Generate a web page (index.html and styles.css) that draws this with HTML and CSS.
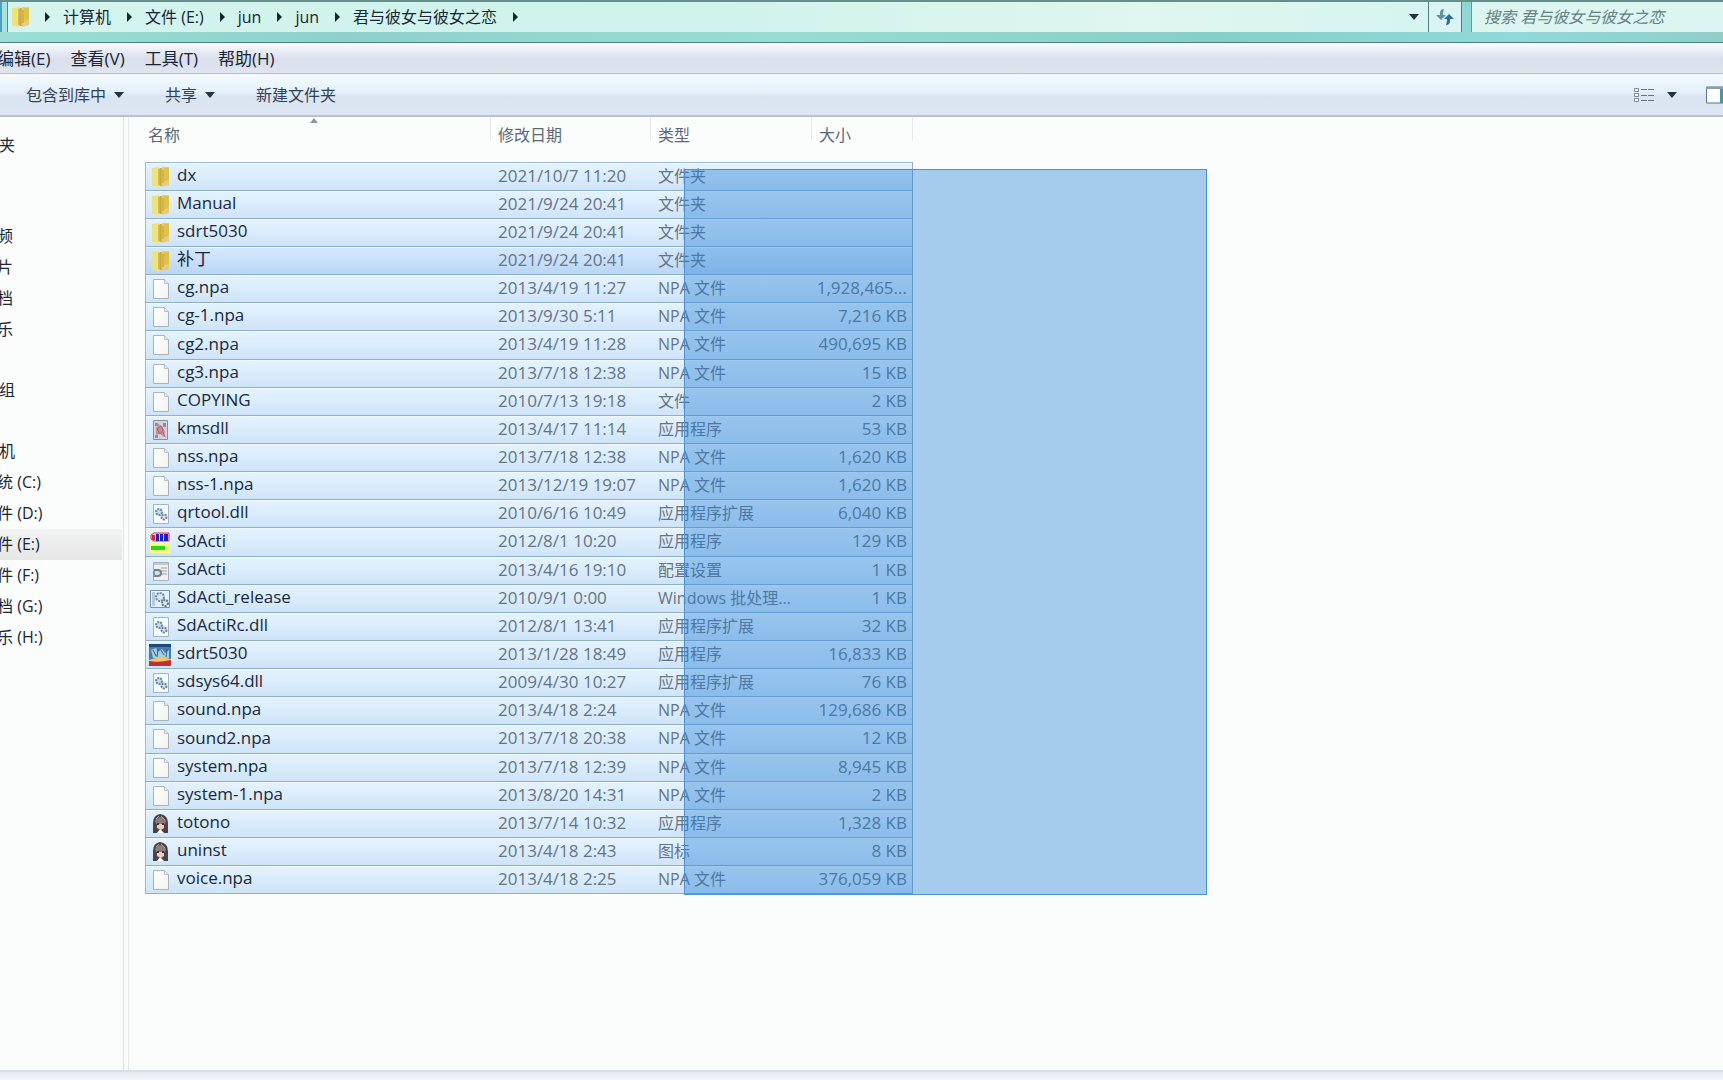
FILE: index.html
```html
<!DOCTYPE html>
<html lang="zh-CN">
<head>
<meta charset="utf-8">
<title>君与彼女与彼女之恋</title>
<link rel="stylesheet" href="styles.css">
</head>
<body>
<svg class="sprite" aria-hidden="true">
  <defs>
    <linearGradient id="gold" x1="0" x2="1" y1="0" y2="0"><stop offset="0" stop-color="#f3e88e"/><stop offset=".45" stop-color="#e6cd55"/><stop offset=".6" stop-color="#c9a630"/><stop offset="1" stop-color="#ecd27a"/></linearGradient>
    <linearGradient id="paper" x1="0" x2="1" y1="0" y2="1"><stop offset="0" stop-color="#fff"/><stop offset="1" stop-color="#f2f2f0"/></linearGradient>
  </defs>
  <symbol id="folder" viewBox="0 0 22 22"><path d="M3 2l7-1v20l-7-1z" fill="#eee27c"/><path d="M8 2h6v18H8z" fill="url(#gold)"/><path d="M13 1h7v18l-7 2z" fill="#e5cc78"/><path d="M15 2h5v11l-5 3z" fill="#dfc348"/><path d="M10 3v16M14 4v13" stroke="#bf9c30"/></symbol>
  <symbol id="file" viewBox="0 0 22 22"><path d="M4.500 1.500h11l4 4v15h-15z" fill="url(#paper)" stroke="#a9b3bc"/><path d="M15.500 1.500v4h4" fill="#e6ebef" stroke="#b7c0c8"/></symbol>
  <symbol id="gears" viewBox="0 0 22 22"><path d="M4.500 1.500h15v19h-15z" fill="#f5fafc" stroke="#a4b4c0"/><circle cx="10" cy="9" r="3" fill="#c3dcec" stroke="#6388a4" stroke-width="2" stroke-dasharray="2 1"/><circle cx="15" cy="14" r="2.500" fill="#dbe6ec" stroke="#6d8494" stroke-width="2" stroke-dasharray="2 1"/></symbol>
  <symbol id="batch" viewBox="0 0 22 22"><path d="M1.500 2.500h19v17h-19z" fill="#e4f1f9" stroke="#7795aa"/><path d="M3 4h3v14H3z" fill="#b7ccda"/><circle cx="11" cy="9" r="4" fill="#d2e5f0" stroke="#708ca0" stroke-width="2" stroke-dasharray="2 1"/><circle cx="16" cy="15" r="3" fill="#d2e5f0" stroke="#5d798d" stroke-width="2" stroke-dasharray="2 1"/></symbol>
  <symbol id="config" viewBox="0 0 22 22"><path d="M4.500 2.500h15v18h-15z" fill="#eef0f0" stroke="#a7b0b6"/><path d="M5 4h14M12 8h6M12 11h6M12 14h6" stroke="#c3cacf" stroke-width="2"/><path d="M5 10h4q3 0 3 3t-3 3H5" fill="#d5dde2" stroke="#75838c" stroke-width="2"/><path d="M5 11v6" stroke="#8795a0" stroke-width="2"/></symbol>
  <symbol id="installer" viewBox="0 0 22 22"><path d="M4.500 1.500h14v19h-14z" fill="#d5d3dc" stroke="#8b8e9c"/><path d="M6 4h3v3H6zM14 4h3v4h-3zM6 16h3v3H6z" fill="#8594a2"/><path d="M9 5l4 2 3 5-1 6-4-3-4 1V9z" fill="#c98f9b"/><path d="M8 10l4-3 2 4-3 4zM14 13l2 5" stroke="#a2606c" fill="none"/></symbol>
  <symbol id="acti" viewBox="0 0 22 22"><path d="M1 0h20v12H1z" fill="#fdf3dc"/><path d="M1 12h20v10H1z" fill="#f4ff7a"/><path d="M5 2h15v8H5L2 8V4z" fill="#e8e4ff" stroke="#e21d46" stroke-width="1"/><path d="M3 4h3v5H3z" fill="#d4204e"/><path d="M7 3h3v7H7zM11 3h3v7h-3zM15 3h4v7h-4z" fill="#211eb9"/><path d="M2 15h14v4H2z" fill="#25d91c"/></symbol>
  <symbol id="game" viewBox="0 0 22 22"><path d="M0 0h22v22H0z" fill="#467eae"/><path d="M0 0h22v3H0z" fill="#20467f"/><path d="M2 6l5-2 2 4 4-3 3 4 4-3v8H4z" fill="#a6cbe4"/><path d="M4 6l3 6M9 5l-1 8M12 6l3 5M18 5l-1 8" stroke="#315b88"/><path d="M0 16q10-4 22-1v4H0z" fill="#f0c761"/><path d="M0 17q10 2 22-1v6H0z" fill="#c62c35"/></symbol>
  <symbol id="girl" viewBox="0 0 22 22"><path d="M4 20V10q0-8 7-9 8 1 8 9v10z" fill="#4f4245"/><path d="M6 8q5-8 11 0l-1 3H7z" fill="#8b7d7d"/><path d="M8 11h7v4l-3 2-4-2z" fill="#e9cfc6"/><path d="M8 11h2M13 11h2" stroke="#3c3135" stroke-width="2"/><path d="M8 20l3-4 4 4z" fill="#fff"/><path d="M7 6l3-3M12 3l4 4" stroke="#b6a7a6"/></symbol>
</svg>

<header class="address-bar">
  <span class="nav-edge"></span>
  <nav class="crumbs" aria-label="地址">
    <svg class="icon"><use href="#folder"/></svg>
    <i class="chevron"></i><a href="#">计算机</a>
    <i class="chevron"></i><a href="#">文件 (E:)</a>
    <i class="chevron"></i><a href="#">jun</a>
    <i class="chevron"></i><a href="#">jun</a>
    <i class="chevron"></i><a href="#">君与彼女与彼女之恋</a>
    <i class="chevron"></i>
    <button class="history" aria-label="历史"><i class="caret"></i></button>
  </nav>
  <button class="refresh" aria-label="刷新"><svg width="20" height="18" viewBox="0 0 20 18"><path d="M9 1Q5 1 5 5v2H1l5 5 5-5H8V5z" fill="#5b95ac"/><path d="M11 17q4 0 4-4v-2h4l-5-5-5 5h3v2z" fill="#2c6da0"/></svg></button>
  <input class="search" type="search" aria-label="搜索" placeholder="搜索 君与彼女与彼女之恋">
</header>

<nav class="menu-bar" aria-label="菜单">
  <button>编辑(E)</button><button>查看(V)</button><button>工具(T)</button><button>帮助(H)</button>
</nav>

<div class="toolbar">
  <button>包含到库中<i class="caret"></i></button>
  <button>共享<i class="caret"></i></button>
  <button>新建文件夹</button>
  <div class="view-tools">
    <button aria-label="视图"><svg width="22" height="16" viewBox="0 0 22 16"><path d="M1.500 1.500h4v3h-4zM1.500 6.500h4v3h-4zM1.500 11.500h4v3h-4z" fill="#fff" stroke="#7d8a98"/><path d="M8 2.500h13M8 8.500h13M8 13.500h13" stroke="#667382" stroke-dasharray="6 1"/></svg></button>
    <button aria-label="更多视图"><i class="caret"></i></button>
    <button class="preview" aria-label="预览窗格"><svg width="17" height="18" viewBox="0 0 17 18"><path d="M.5 1h17v16H.5z" fill="#fff" stroke="#5b7388"/><path d="M0 1h17v2H0z" fill="#8b9eac"/><path d="M14 3h3v14h-3z" fill="#3f9aa3"/></svg></button>
  </div>
</div>

<main class="explorer">
  <aside class="sidebar">
    <ul><li>夹</li></ul>
    <ul class="nested after-favorites"><li>频</li><li>片</li><li>档</li><li>乐</li></ul>
    <ul><li>组</li></ul>
    <ul><li>机</li></ul>
    <ul class="nested drives"><li>统 (C:)</li><li>件 (D:)</li><li class="current">件 (E:)</li><li>件 (F:)</li><li>档 (G:)</li><li>乐 (H:)</li></ul>
  </aside>
  <section class="files">
    <table>
      <thead><tr><th class="name">名称<i class="sort"></i></th><th class="date">修改日期</th><th class="type">类型</th><th class="size">大小</th></tr></thead>
      <tbody>
        <tr><td><svg class="icon"><use href="#folder"/></svg>dx</td><td>2021/10/7 11:20</td><td>文件夹</td><td></td></tr>
        <tr><td><svg class="icon"><use href="#folder"/></svg>Manual</td><td>2021/9/24 20:41</td><td>文件夹</td><td></td></tr>
        <tr><td><svg class="icon"><use href="#folder"/></svg>sdrt5030</td><td>2021/9/24 20:41</td><td>文件夹</td><td></td></tr>
        <tr class="focused"><td><svg class="icon"><use href="#folder"/></svg>补丁</td><td>2021/9/24 20:41</td><td>文件夹</td><td></td></tr>
        <tr><td><svg class="icon"><use href="#file"/></svg>cg.npa</td><td>2013/4/19 11:27</td><td>NPA 文件</td><td>1,928,465...</td></tr>
        <tr><td><svg class="icon"><use href="#file"/></svg>cg-1.npa</td><td>2013/9/30 5:11</td><td>NPA 文件</td><td>7,216 KB</td></tr>
        <tr><td><svg class="icon"><use href="#file"/></svg>cg2.npa</td><td>2013/4/19 11:28</td><td>NPA 文件</td><td>490,695 KB</td></tr>
        <tr><td><svg class="icon"><use href="#file"/></svg>cg3.npa</td><td>2013/7/18 12:38</td><td>NPA 文件</td><td>15 KB</td></tr>
        <tr><td><svg class="icon"><use href="#file"/></svg>COPYING</td><td>2010/7/13 19:18</td><td>文件</td><td>2 KB</td></tr>
        <tr><td><svg class="icon"><use href="#installer"/></svg>kmsdll</td><td>2013/4/17 11:14</td><td>应用程序</td><td>53 KB</td></tr>
        <tr><td><svg class="icon"><use href="#file"/></svg>nss.npa</td><td>2013/7/18 12:38</td><td>NPA 文件</td><td>1,620 KB</td></tr>
        <tr><td><svg class="icon"><use href="#file"/></svg>nss-1.npa</td><td>2013/12/19 19:07</td><td>NPA 文件</td><td>1,620 KB</td></tr>
        <tr><td><svg class="icon"><use href="#gears"/></svg>qrtool.dll</td><td>2010/6/16 10:49</td><td>应用程序扩展</td><td>6,040 KB</td></tr>
        <tr><td><svg class="icon"><use href="#acti"/></svg>SdActi</td><td>2012/8/1 10:20</td><td>应用程序</td><td>129 KB</td></tr>
        <tr><td><svg class="icon"><use href="#config"/></svg>SdActi</td><td>2013/4/16 19:10</td><td>配置设置</td><td>1 KB</td></tr>
        <tr><td><svg class="icon"><use href="#batch"/></svg>SdActi_release</td><td>2010/9/1 0:00</td><td>Windows 批处理...</td><td>1 KB</td></tr>
        <tr><td><svg class="icon"><use href="#gears"/></svg>SdActiRc.dll</td><td>2012/8/1 13:41</td><td>应用程序扩展</td><td>32 KB</td></tr>
        <tr><td><svg class="icon"><use href="#game"/></svg>sdrt5030</td><td>2013/1/28 18:49</td><td>应用程序</td><td>16,833 KB</td></tr>
        <tr><td><svg class="icon"><use href="#gears"/></svg>sdsys64.dll</td><td>2009/4/30 10:27</td><td>应用程序扩展</td><td>76 KB</td></tr>
        <tr><td><svg class="icon"><use href="#file"/></svg>sound.npa</td><td>2013/4/18 2:24</td><td>NPA 文件</td><td>129,686 KB</td></tr>
        <tr><td><svg class="icon"><use href="#file"/></svg>sound2.npa</td><td>2013/7/18 20:38</td><td>NPA 文件</td><td>12 KB</td></tr>
        <tr><td><svg class="icon"><use href="#file"/></svg>system.npa</td><td>2013/7/18 12:39</td><td>NPA 文件</td><td>8,945 KB</td></tr>
        <tr><td><svg class="icon"><use href="#file"/></svg>system-1.npa</td><td>2013/8/20 14:31</td><td>NPA 文件</td><td>2 KB</td></tr>
        <tr><td><svg class="icon"><use href="#girl"/></svg>totono</td><td>2013/7/14 10:32</td><td>应用程序</td><td>1,328 KB</td></tr>
        <tr><td><svg class="icon"><use href="#girl"/></svg>uninst</td><td>2013/4/18 2:43</td><td>图标</td><td>8 KB</td></tr>
        <tr><td><svg class="icon"><use href="#file"/></svg>voice.npa</td><td>2013/4/18 2:25</td><td>NPA 文件</td><td>376,059 KB</td></tr>
      </tbody>
    </table>
    <div class="marquee"></div>
  </section>
</main>
<footer class="details"></footer>
</body>
</html>
```
FILE: styles.css
```css
* { box-sizing: border-box; }

body {
  margin: 0;
  min-height: 100vh;
  display: flex;
  flex-direction: column;
  overflow-x: hidden;
  background: #fbfdfd;
  color: #1a2633;
  font: 16px/20px "Open Sans", "Noto Sans CJK SC", sans-serif;
}

button {
  border: 0;
  padding: 0;
  background: none;
  color: inherit;
  font: inherit;
  white-space: nowrap;
}

a { color: inherit; text-decoration: none; }
ul { margin: 0; padding: 0; list-style: none; }
.sprite { position: absolute; width: 0; height: 0; }
.icon { width: 22px; height: 22px; flex: none; }

.caret {
  display: inline-block;
  border: 5px solid transparent;
  border-top: 6px solid #26323f;
  border-bottom: 0;
}

.chevron {
  border: 5px solid transparent;
  border-left: 5px solid #13282c;
  border-right: 0;
}

/* Address bar */
.address-bar {
  display: flex;
  height: 43px;
  padding-bottom: 10px;
  border-top: 2px solid #668e8a;
  border-bottom: 1px solid #4b8482;
  background: linear-gradient(90deg, #9adfd6, #8fd0cc 20%, #99dcd4 45%, #86cfc8 70%, #90d9d8 88%, #8fcfca);
}

.nav-edge {
  width: 7px;
  background: linear-gradient(90deg, #4f9fc0 2px, #a5e2e0 2px);
}

.crumbs {
  flex: 1;
  display: flex;
  align-items: center;
  border-left: 1px solid #4f8b8c;
  background: linear-gradient(90deg, #d5f4ee, #cdf3ea 45%, #e0f6f0 80%, #d6f5ef);
}

.crumbs .icon { margin-left: 1px; }
.crumbs .chevron { margin: 0 13px 0 16px; }
.crumbs .icon + .chevron { margin-left: 14px; }
.crumbs .history { margin-left: auto; width: 28px; }
.crumbs .caret { display: block; width: 10px; margin: auto; }

.refresh {
  width: 34px;
  border-left: 1px solid #55807f;
  border-right: 1px solid #55807f;
  background: #d9f4f1;
}

.refresh svg { display: block; margin: auto; }

.search {
  width: 252px;
  margin-left: 9px;
  padding: 0 12px;
  border: 0;
  border-left: 1px solid #6a9a98;
  border-radius: 0;
  background: #dcf5f0;
  font: italic 16px/20px "Open Sans", "Noto Sans CJK SC", sans-serif;
  appearance: none;
}

.search::placeholder { color: #64807f; opacity: 1; }

/* Menus */
.menu-bar {
  display: flex;
  gap: 20px;
  height: 31px;
  margin-left: -3px;
  padding-top: 2px;
  border-bottom: 1px solid #b7bfce;
  background: linear-gradient(#fafcff, #e9edf6 25%, #d9dfeb 55%, #dfe5f0);
  font-size: 17px;
}

.toolbar {
  display: flex;
  align-items: center;
  gap: 41px;
  height: 43px;
  padding-left: 26px;
  border-bottom: 2px solid #b9c0c8;
  background: linear-gradient(#f6f9fc, #ecf7fe 20%, #e3eef9 45%, #dae5f1 55%, #dce7f3);
  color: #334256;
}

.toolbar .caret { margin-left: 8px; vertical-align: 3px; }
.view-tools { display: flex; align-items: center; gap: 12px; margin-left: auto; }
.view-tools svg { display: block; }
.toolbar .view-tools .caret { margin-left: 0; }
.preview { margin-left: 17px; }

/* Panes */
.explorer { flex: 1; display: flex; }

.sidebar {
  width: 129px;
  flex: none;
  display: flex;
  flex-direction: column;
  gap: 30px;
  padding: 13px 6px 0 0;
  border-right: 1px solid #e5e8ee;
  background: linear-gradient(#dfe3e9, #dfe3e9) 123px 0 / 1px 100% no-repeat;
}

.sidebar li { height: 31px; line-height: 31px; margin-left: -1px; }
.sidebar .nested li { margin-left: -3px; }
.sidebar .after-favorites { padding-top: 30px; }
.sidebar .drives { margin-top: -30px; }
.sidebar .current { background: linear-gradient(#f3f3f3, #e5e6e6); }

.files {
  position: relative;
  flex: 1;
  padding-left: 16px;
}

table { border-collapse: separate; border-spacing: 0; table-layout: fixed; width: 768px; }

th {
  position: relative;
  height: 45px;
  padding: 0 0 10px 7px;
  background: linear-gradient(#e3eaf0, #e3eaf0) right top / 1px 24px no-repeat;
  color: #5a6775;
  font-weight: 400;
  text-align: left;
}

th.name { width: 346px; padding-left: 3px; }
th.date { width: 160px; }
th.type { width: 161px; }

.sort {
  position: absolute;
  top: 1px;
  left: 165px;
  border: 4px solid transparent;
  border-bottom: 5px solid #8a96a2;
  border-top: 0;
}

td {
  height: 28px;
  padding: 0 0 2px 7px;
  border-bottom: 1px solid #8fb0cc;
  background: linear-gradient(#e4f3fd, #daecfc 50%, #cfe4f8);
  box-shadow: inset 0 1px #f0f9ff;
  color: #667583;
  font-size: 17px;
  line-height: 20px;
  white-space: nowrap;
}

tbody tr:nth-child(7n) td { height: 29px; }
tbody tr:first-child td { height: 29px; border-top: 1px solid #9db9cf; }
tbody .focused td { background: linear-gradient(#d6e9fc, #b9d6f6); }

td:first-child {
  padding: 0 0 0 3px;
  border-left: 1px solid #9bb9d3;
  color: #1a2939;
}

td .icon { margin-right: 6px; vertical-align: middle; }
td:nth-child(3) { font-size: 16px; }

td:last-child {
  padding: 0 5px 2px 0;
  border-right: 1px solid #8fb0cc;
  text-align: right;
}

.marquee {
  position: absolute;
  top: 52px;
  left: 555px;
  width: 523px;
  height: 726px;
  border: 1px solid #4a92d4;
  background: rgba(38, 127, 212, .4);
}

.details {
  height: 10px;
  border-top: 2px solid #d9dee2;
  background: linear-gradient(#e5eaef, #f3f7fb);
}
```
